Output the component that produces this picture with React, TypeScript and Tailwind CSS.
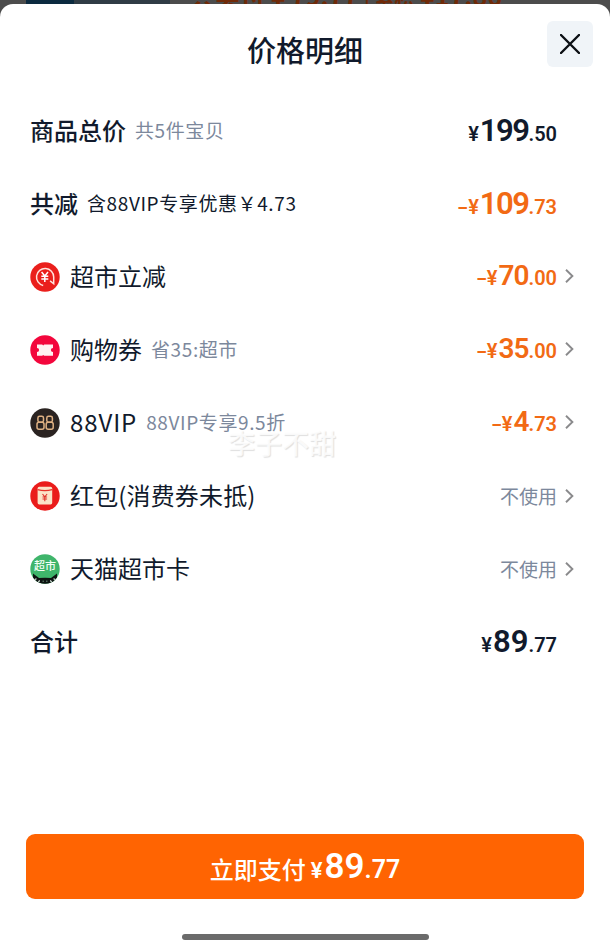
import type { ReactNode } from "react";
import { clsx } from "clsx";

type PriceProps = {
  whole: string;
  cents: string;
  minus?: boolean;
  wholeClass: string;
  centsClass?: string;
  signClass?: string;
  className?: string;
};

function Price({ whole, cents, minus, wholeClass, centsClass, signClass, className }: PriceProps) {
  return (
    <span
      className={clsx(
        "flex items-baseline whitespace-nowrap font-['Roboto','Noto_Sans_CJK_SC',sans-serif] font-semibold leading-none",
        className
      )}
    >
      {minus && <span className="mr-px w-[10px] origin-left scale-x-150 text-[21px]">-</span>}
      <span className={signClass ?? "mr-px text-[20px]"}>¥</span>
      <span className={wholeClass}>{whole}</span>
      <span className={centsClass ?? "text-[20px]"}>.{cents}</span>
    </span>
  );
}

function Chevron() {
  return (
    <svg className="ml-2 h-[14px] w-[9px] shrink-0" viewBox="0 0 9 14" fill="none">
      <path d="M1 .8L7.4 7 1 13.2" stroke="#8a8a8c" strokeWidth="1.9" />
    </svg>
  );
}

function InstantIcon() {
  return (
    <svg className="size-[30px]" viewBox="0 0 30 30" fill="none">
      <circle cx="15" cy="15" r="14.7" fill="#ea1f1c" />
      <path
        d="M13.2 23.4A8.6 8.6 0 1 1 23.7 15v6.8l-3.6-2.9"
        stroke="#ffe3dc"
        strokeWidth="1.5"
      />
      <path
        d="M11.6 10l3.2 4L18 10M14.8 14v6M11.3 14.3h7M11.3 17h7"
        stroke="#fff"
        strokeWidth="1.5"
      />
    </svg>
  );
}

function CouponIcon() {
  return (
    <svg className="size-[30px]" viewBox="0 0 30 30" fill="none">
      <circle cx="15" cy="15" r="14.7" fill="#f3063c" />
      <path
        d="M7 9.6h5.2l1 .8 1-.8H23v3.3a2.1 2.1 0 0 0 0 4.2v3.6h-8.8l-1-.8-1 .8H7v-3.6a2.1 2.1 0 0 0 0-4.2z"
        fill="#fff0f1"
      />
    </svg>
  );
}

function VipIcon() {
  return (
    <svg className="size-[30px]" viewBox="0 0 30 30" fill="none">
      <circle cx="15" cy="15" r="14.7" fill="#2a2321" />
      <g stroke="#dfb183" strokeWidth="1.5">
        <rect x="7.9" y="8.3" width="5.6" height="6" rx="1.7" />
        <rect x="7" y="14.3" width="7" height="7" rx="2" />
        <rect x="16.8" y="8.3" width="5.6" height="6" rx="1.7" />
        <rect x="16.2" y="14.3" width="7" height="7" rx="2" />
      </g>
    </svg>
  );
}

function RedPacketIcon() {
  return (
    <svg className="size-[30px]" viewBox="0 0 30 30" fill="none">
      <circle cx="15" cy="15" r="14.7" fill="#ea1c1b" />
      <rect x="7.6" y="5.8" width="14.6" height="17.6" rx="1.6" fill="#fbe3c8" />
      <path d="M7.6 8.6q7.3 2 14.6 0" stroke="#e4332a" strokeWidth="1.2" />
      <path
        d="M12.5 13l2.3 2.8L17.1 13M14.8 15.7v4.5M12.5 16h4.6M12.5 18h4.6"
        stroke="#e0352c"
        strokeWidth="1.1"
      />
    </svg>
  );
}

function MarketIcon() {
  return (
    <svg className="size-[30px]" viewBox="0 0 30 30">
      <defs>
        <clipPath id="market">
          <circle cx="15" cy="15" r="14.7" />
        </clipPath>
      </defs>
      <g clipPath="url(#market)">
        <rect width="30" height="30" fill="#3fb56b" />
        <path d="M3 19.5l6 4.6q6-.8 12 0l6-4.6V30H3z" fill="#0d1211" />
        <path
          d="M3.5 26l3-1.2M26.5 26l-3-1.2M8 29l1.6-2.6M22 29l-1.6-2.6"
          stroke="#e9f7ee"
          strokeWidth="1.2"
        />
        <path d="M12.6 27.2h1.2M16.2 27.2h1.2" stroke="#7fae90" strokeWidth="1" />
      </g>
      <text
        x="15"
        y="15.6"
        textAnchor="middle"
        fill="#f3fff6"
        className="font-['Noto_Sans_CJK_SC',sans-serif] text-[11px] font-medium"
      >
        超市
      </text>
    </svg>
  );
}

type RowProps = {
  icon?: ReactNode;
  title: string;
  titleClass?: string;
  note?: string;
  noteClass?: string;
  link?: boolean;
  children: ReactNode;
};

function Row({ icon, title, titleClass, note, noteClass, link, children }: RowProps) {
  return (
    <div className="flex h-[73.1px] items-center pl-[30px]">
      {icon && <span className="mr-[10px] shrink-0">{icon}</span>}
      <span className={clsx("whitespace-nowrap pb-[2px] text-[24px] leading-none", titleClass)}>
        {title}
      </span>
      {note && (
        <span
          className={clsx(
            "ml-[9px] whitespace-nowrap pb-[2px] text-[19px] leading-none tracking-[0.6px]",
            noteClass
          )}
        >
          {note}
        </span>
      )}
      <div className={clsx("ml-auto flex items-center pb-px", link ? "pr-[36px]" : "pr-[53px]")}>
        {children}
        {link && <Chevron />}
      </div>
    </div>
  );
}

const wholeTotal = "text-[31px] tracking-[-1.5px]";
const wholeItem = "text-[28px] tracking-[-1px]";

export default function App() {
  return (
    <div className="relative h-[950px] w-[610px] overflow-hidden bg-[#4c4c4c] font-['Noto_Sans_CJK_SC',sans-serif] text-[#111a2c]">
      {/* order page dimmed behind the sheet */}
      <div className="flex h-1 overflow-hidden whitespace-nowrap">
        <div className="ml-[26px] h-1 w-12 bg-[#0b2a3f]" />
        <div className="h-1 w-24 bg-[#303c45]" />
        <div className="-mt-[19px] ml-5 text-[25px] font-bold leading-[28px] text-[#702a08]">
          共实付 ¥ 79.77 <span className="text-[20px]">| 累积</span> ¥17.86
        </div>
      </div>

      <div className="flex h-[946px] flex-col rounded-t-[13px] bg-white">
        <header className="flex h-[90px] shrink-0">
          <div className="w-[63px]" />
          <h1 className="flex-1 pt-[31px] text-center text-[29px] font-medium leading-none">
            价格明细
          </h1>
          <button
            aria-label="关闭"
            className="mr-[17px] mt-[17px] flex h-[46px] w-[46px] items-center justify-center rounded-[6px] bg-[#f0f4f8]"
          >
            <svg className="size-5" viewBox="0 0 20 20" fill="none">
              <path d="M1 1l18 18M19 1L1 19" stroke="#0c0f14" strokeWidth="2.4" strokeLinecap="round" />
            </svg>
          </button>
        </header>

        <main className="flex-1">
          <Row title="商品总价" titleClass="font-medium" note="共5件宝贝" noteClass="text-[#7c889c]">
            <Price whole="199" cents="50" wholeClass={wholeTotal} />
          </Row>
          <Row title="共减" titleClass="font-medium" note="含88VIP专享优惠￥4.73">
            <Price minus whole="109" cents="73" wholeClass={wholeTotal} className="text-[#f26a14]" />
          </Row>
          <Row icon={<InstantIcon />} title="超市立减" link>
            <Price minus whole="70" cents="00" wholeClass={wholeItem} className="text-[#f26a14]" />
          </Row>
          <Row
            icon={<CouponIcon />}
            title="购物券"
            note="省35:超市"
            noteClass="text-[#7c889c]"
            link
          >
            <Price minus whole="35" cents="00" wholeClass={wholeItem} className="text-[#f26a14]" />
          </Row>
          <Row
            icon={<VipIcon />}
            title="88VIP"
            titleClass="tracking-[0.9px]"
            note="88VIP专享9.5折"
            noteClass="text-[#7c889c]"
            link
          >
            <Price minus whole="4" cents="73" wholeClass={wholeItem} className="text-[#f26a14]" />
          </Row>
          <Row
            icon={<RedPacketIcon />}
            title="红包(消费券未抵)"
            titleClass="tracking-[0.15px]"
            link
          >
            <span className="pb-px text-[19px] leading-none text-[#7c889c]">不使用</span>
          </Row>
          <Row icon={<MarketIcon />} title="天猫超市卡" link>
            <span className="pb-px text-[19px] leading-none text-[#7c889c]">不使用</span>
          </Row>
          <Row title="合计" titleClass="font-medium">
            <Price whole="89" cents="77" wholeClass="text-[31px]" />
          </Row>
        </main>

        <footer className="flex shrink-0 flex-col items-center">
          <button className="flex h-[65px] w-[558px] items-center justify-center rounded-[9px] bg-[#ff6402] text-white">
            <span className="mr-[5px] mt-1 text-[24px] font-medium leading-none">立即支付</span>
            <Price
              whole="89"
              cents="77"
              wholeClass="text-[35px]"
              centsClass="text-[25px]"
              signClass="mr-[2px] text-[22px]"
            />
          </button>
          <div className="mb-[10px] mt-[35px] h-[6px] w-[247px] rounded-full bg-[#6b6b6b]" />
        </footer>
      </div>

      <div className="pointer-events-none absolute left-[228px] top-[429px] whitespace-nowrap text-[27px] font-medium leading-none text-white/80 [text-shadow:1px_1px_1px_rgba(0,0,0,0.13)]">
        李子不甜
      </div>
    </div>
  );
}
